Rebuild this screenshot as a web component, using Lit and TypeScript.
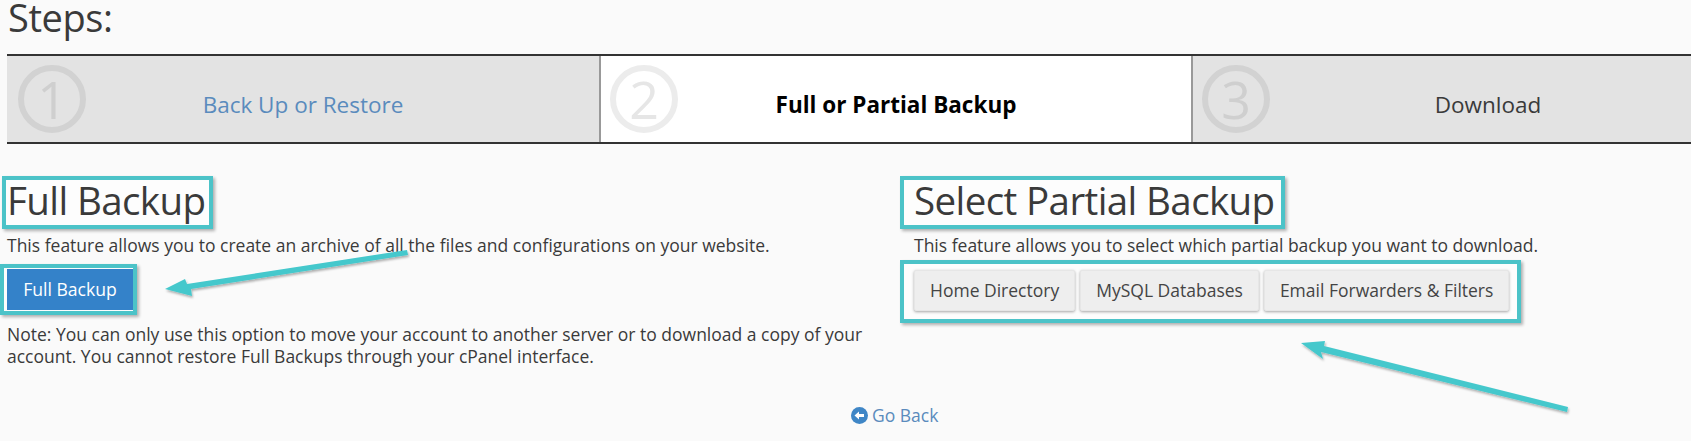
import { LitElement, html, css } from "lit";
import { customElement } from "lit/decorators.js";

@customElement("app-root")
export class AppRoot extends LitElement {
  static styles = css`
    :host {
      display: block;
      position: relative;
      width: 1691px;
      height: 441px;
      overflow: hidden;
      background: #fafafa;
      color: #3a3a3a;
      font-family: "Open Sans", "Liberation Sans", sans-serif;
      font-size: 17.5px;
      line-height: 22.5px;
    }

    h1 {
      margin: 0;
      padding: 0 0 0 8px;
      height: 54px;
      font-size: 38px;
      line-height: 35px;
      font-weight: 400;
      letter-spacing: -0.4px;
    }

    .steps {
      display: flex;
      width: 1784px;
      margin-left: 7px;
      border-top: 2px solid #333;
      border-bottom: 2px solid #333;
    }

    .step {
      position: relative;
      flex: 0 0 592px;
      height: 86px;
      box-sizing: border-box;
      padding-top: 13px;
      display: flex;
      align-items: center;
      justify-content: center;
      background: #e3e3e3;
      font-size: 22.5px;
      border-left: 2px solid #999;
    }

    .step:first-child {
      border-left: 0;
    }

    .step.active {
      background: #fff;
      color: #000;
      font-weight: 700;
    }

    .step.link {
      color: #5a8bbd;
    }

    .num {
      position: absolute;
      left: 9px;
      top: 9px;
      width: 68px;
      height: 68px;
      box-sizing: border-box;
      border: 6px solid #d2d2d2;
      border-radius: 50%;
      display: flex;
      align-items: center;
      justify-content: center;
      color: #cfcfcf;
      font-size: 52px;
      line-height: 1;
      font-weight: 400;
    }

    .step:first-child .num {
      left: 11px;
    }

    .active .num {
      border-color: #ececec;
      color: #e6e6e6;
      font-weight: 400;
    }

    .cols {
      display: grid;
      grid-template-columns: 907px 1fr;
      padding-top: 36px;
    }

    .col {
      padding-left: 7px;
    }

    .mark {
      display: inline-block;
      border: 4px solid #4cc3c8;
      box-shadow: 2px 2px 3px rgba(0, 0, 0, 0.3);
      background: #fdfdfd;
    }

    h2 {
      margin: -4px 0 0 -5px;
      padding: 0 4px 0 1px;
      height: 45px;
      font-size: 38.5px;
      line-height: 40px;
      font-weight: 400;
      letter-spacing: -0.6px;
      width: fit-content;
      border: 4px solid #4cc3c8;
      box-shadow: 2px 2px 3px rgba(0, 0, 0, 0.3);
      background: #fdfdfd;
    }

    .col.right h2 {
      margin-left: -14px;
      padding: 0 6px 0 10px;
    }

    p {
      margin: 0;
    }

    .lead {
      margin-top: 5px;
    }

    .primary-wrap {
      margin: 7px 0 0 -7px;
      padding: 1px 0 1px 3px;
      width: fit-content;
    }

    .primary {
      display: block;
      width: 126px;
      height: 41px;
      box-sizing: border-box;
      border: 0;
      padding: 0;
      background: #3482c9;
      color: #fff;
      font: inherit;
      font-size: 17.6px;
    }

    .note {
      margin-top: 8px;
      width: 893px;
    }

    .group {
      display: flex;
      gap: 5px;
      width: fit-content;
      margin: 3px 0 0 -14px;
      padding: 6px 8px 8px 10px;
    }

    .group button {
      height: 41px;
      box-sizing: border-box;
      padding: 0 15px;
      border: 1px solid #e6e6e6;
      border-radius: 2px;
      background: #eee;
      color: #444;
      font: inherit;
      font-size: 17.5px;
      box-shadow: 0 1px 3px rgba(0, 0, 0, 0.35);
    }

    .back {
      position: absolute;
      left: 851px;
      top: 404px;
      display: flex;
      align-items: center;
      gap: 4px;
      color: #5a8bbd;
      font-size: 17.5px;
    }

    .arrows {
      position: absolute;
      inset: 0;
      width: 1691px;
      height: 441px;
      pointer-events: none;
    }
  `;

  render() {
    return html`
      <h1>Steps:</h1>
      <div class="steps">
        <div class="step link"><span class="num">1</span>Back Up or Restore</div>
        <div class="step active"><span class="num">2</span>Full or Partial Backup</div>
        <div class="step"><span class="num">3</span>Download</div>
      </div>
      <div class="cols">
        <div class="col">
          <h2>Full Backup</h2>
          <p class="lead">This feature allows you to create an archive of all the files and configurations on your website.</p>
          <div class="primary-wrap mark"><button class="primary">Full Backup</button></div>
          <p class="note">Note: You can only use this option to move your account to another server or to download a copy of your account. You cannot restore Full Backups through your cPanel interface.</p>
        </div>
        <div class="col right">
          <h2>Select Partial Backup</h2>
          <p class="lead">This feature allows you to select which partial backup you want to download.</p>
          <div class="group mark">
            <button>Home Directory</button>
            <button>MySQL Databases</button>
            <button>Email Forwarders &amp; Filters</button>
          </div>
        </div>
      </div>
      <div class="back">
        <svg width="17" height="17" viewBox="0 0 17 17">
          <circle cx="8.5" cy="8.5" r="8.5" fill="#3f86c6"></circle>
          <path d="M3.5 8.5 8 4.5v2.5h5v3H8v2.5z" fill="#fff"></path>
        </svg>
        Go Back
      </div>
      <svg class="arrows" viewBox="0 0 1691 441">
        <defs>
          <filter id="sh" x="-5%" y="-20%" width="110%" height="140%">
            <feDropShadow dx="1" dy="2" stdDeviation="1.2" flood-color="#000" flood-opacity="0.3"></feDropShadow>
          </filter>
        </defs>
        <g filter="url(#sh)">
          <polygon points="407,250 408,255 191,289 192,296 165,289 185,279 187,284" fill="#45c8cc"></polygon>
          <polygon points="1568,407 1567,412 1321,352 1323,359 1301,343 1325,341 1324,346" fill="#45c8cc"></polygon>
        </g>
      </svg>
    `;
  }
}
